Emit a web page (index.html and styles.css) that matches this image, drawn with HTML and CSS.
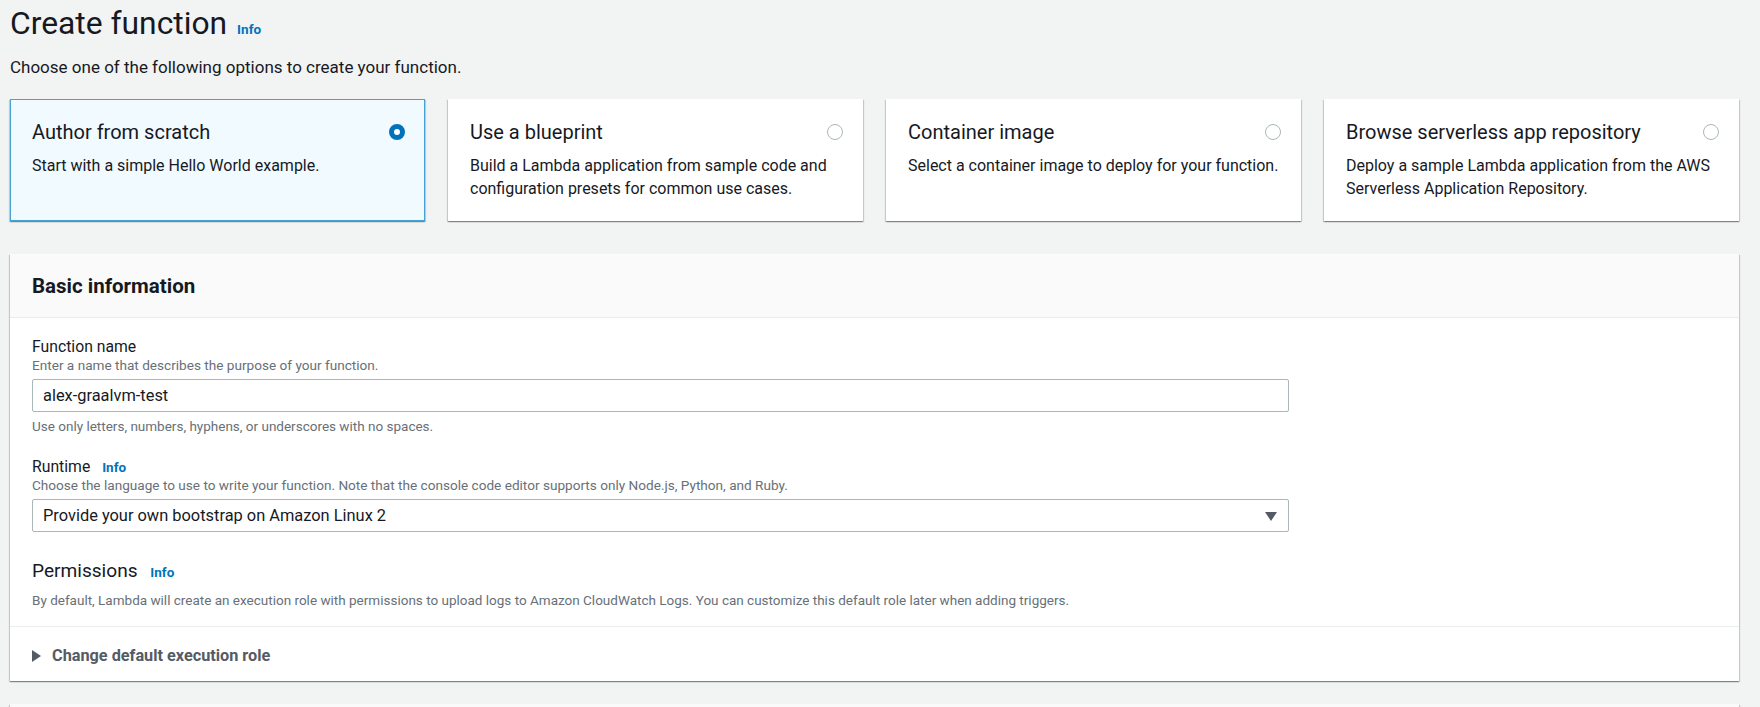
FILE: index.html
```html
<!DOCTYPE html>
<html lang="en">
<head>
<meta charset="utf-8">
<title>Create function</title>
<link rel="stylesheet" href="styles.css">
</head>
<body>
<div class="page">
  <h1 class="page-title">Create function<a class="info">Info</a></h1>
  <p class="page-sub">Choose one of the following options to create your function.</p>

  <div class="options">
    <div class="option selected">
      <div class="option-head">
        <span class="option-title">Author from scratch</span>
        <span class="radio on"></span>
      </div>
      <p class="option-desc">Start with a simple Hello World example.</p>
    </div>
    <div class="option">
      <div class="option-head">
        <span class="option-title">Use a blueprint</span>
        <span class="radio"></span>
      </div>
      <p class="option-desc">Build a Lambda application from sample code and configuration presets for common use cases.</p>
    </div>
    <div class="option">
      <div class="option-head">
        <span class="option-title">Container image</span>
        <span class="radio"></span>
      </div>
      <p class="option-desc">Select a container image to deploy for your function.</p>
    </div>
    <div class="option">
      <div class="option-head">
        <span class="option-title">Browse serverless app repository</span>
        <span class="radio"></span>
      </div>
      <p class="option-desc">Deploy a sample Lambda application from the AWS Serverless Application Repository.</p>
    </div>
  </div>

  <section class="panel">
    <div class="panel-head"><h2>Basic information</h2></div>
    <div class="panel-body">
      <div class="field">
        <div class="label">Function name</div>
        <div class="hint">Enter a name that describes the purpose of your function.</div>
        <div class="control input">alex-graalvm-test</div>
        <div class="constraint">Use only letters, numbers, hyphens, or underscores with no spaces.</div>
      </div>
      <div class="field field-gap">
        <div class="label">Runtime <a class="info">Info</a></div>
        <div class="hint">Choose the language to use to write your function. Note that the console code editor supports only Node.js, Python, and Ruby.</div>
        <div class="control select">
          <span>Provide your own bootstrap on Amazon Linux 2</span>
          <svg class="caret-down" width="12" height="10" viewBox="0 0 12 10"><polygon points="0,1 12,1 6,10" fill="#545b64"/></svg>
        </div>
      </div>
      <div class="perm">
        <h3>Permissions <a class="info">Info</a></h3>
        <p class="hint perm-desc">By default, Lambda will create an execution role with permissions to upload logs to Amazon CloudWatch Logs. You can customize this default role later when adding triggers.</p>
      </div>
    </div>
    <div class="expander">
      <svg class="caret-right" width="9" height="12" viewBox="0 0 9 12"><polygon points="0,0 9,6 0,12" fill="#545b64"/></svg>
      <span>Change default execution role</span>
    </div>
  </section>

  <section class="panel next">
    <div class="panel-head empty"></div>
  </section>
</div>
</body>
</html>
```

FILE: styles.css
```css
* { box-sizing: border-box; }

html, body {
  margin: 0;
  padding: 0;
  background: #f2f3f3;
}

body {
  font-family: Roboto, "Liberation Sans", Arial, sans-serif;
  color: #16191f;
  overflow: hidden;
  height: 707px;
}

.page {
  padding: 3px 21px 0 10px;
}

.page-title {
  margin: 0;
  font-size: 31.8px;
  line-height: 40px;
  font-weight: 400;
}

.info {
  color: #0073bb;
  font-size: 13.5px;
  font-weight: 700;
  margin-left: 8px;
  text-decoration: none;
}

.page-title .info {
  margin-left: 10px;
}

.page-sub {
  margin: 6.5px 0 0;
  font-size: 17px;
  line-height: 22px;
}

.options {
  margin-top: 21px;
  display: grid;
  grid-template-columns: repeat(4, 1fr);
  gap: 23px;
}

.option {
  background: #fff;
  border: 1px solid transparent;
  padding: 19px 19px 20px 21px;
  min-height: 121px;
  box-shadow: 0 1px 1px 0 rgba(0, 28, 36, 0.3), 1px 1px 1px 0 rgba(0, 28, 36, 0.15), -1px 1px 1px 0 rgba(0, 28, 36, 0.15);
}

.option.selected {
  background: #f1faff;
  border-color: #44a3d4;
}

.option-head {
  display: flex;
  align-items: center;
  justify-content: space-between;
}

.option-title {
  font-size: 20px;
  line-height: 26px;
}

.radio {
  width: 16px;
  height: 16px;
  border-radius: 50%;
  border: 1px solid #aab7b8;
  background: #fff;
  flex: none;
}

.radio.on {
  border: 5px solid #0073bb;
}

.option-desc {
  margin: 10.5px 0 0;
  font-size: 16px;
  line-height: 22.5px;
}

.panel {
  margin-top: 33px;
  background: #fff;
  box-shadow: 0 1px 1px 0 rgba(0, 28, 36, 0.3), 1px 1px 1px 0 rgba(0, 28, 36, 0.15), -1px 1px 1px 0 rgba(0, 28, 36, 0.15);
}

.panel.next {
  margin-top: 23px;
}

.panel-head {
  background: #fafafa;
  border-bottom: 1px solid #eaeded;
  padding: 19px 22px 18px;
}

.panel-head.empty {
  height: 64px;
}

.panel-head h2 {
  margin: 0;
  font-size: 20.5px;
  line-height: 26px;
  font-weight: 700;
}

.panel-body {
  padding: 19px 22px 17px;
}

.label {
  font-size: 15.75px;
  line-height: 20px;
}

.hint {
  font-size: 13.6px;
  line-height: 17px;
  color: #687078;
}

.control {
  margin-top: 5px;
  width: 1257px;
  max-width: 100%;
  height: 33px;
  border: 1px solid #aab7b8;
  border-radius: 2px;
  background: #fff;
  font-size: 16.4px;
  padding: 0 11px 0 10px;
  display: flex;
  align-items: center;
}

.select {
  justify-content: space-between;
}

.caret-down {
  display: block;
}

.constraint {
  margin-top: 6px;
  font-size: 13.5px;
  line-height: 17px;
  color: #687078;
}

.field-gap {
  margin-top: 22px;
}

.perm {
  margin-top: 26px;
}

.perm h3 {
  margin: 0;
  font-size: 19.1px;
  line-height: 25px;
  font-weight: 400;
}

.perm h3 .info {
  margin-left: 8px;
}

.perm-desc {
  margin: 7px 0 0;
  font-size: 13.5px;
}

.expander {
  border-top: 1px solid #eaeded;
  padding: 19px 22px 15px;
  display: flex;
  align-items: center;
  gap: 11px;
  color: #545b64;
  font-size: 16.25px;
  line-height: 20px;
  font-weight: 700;
}

.caret-right {
  display: block;
}
```
